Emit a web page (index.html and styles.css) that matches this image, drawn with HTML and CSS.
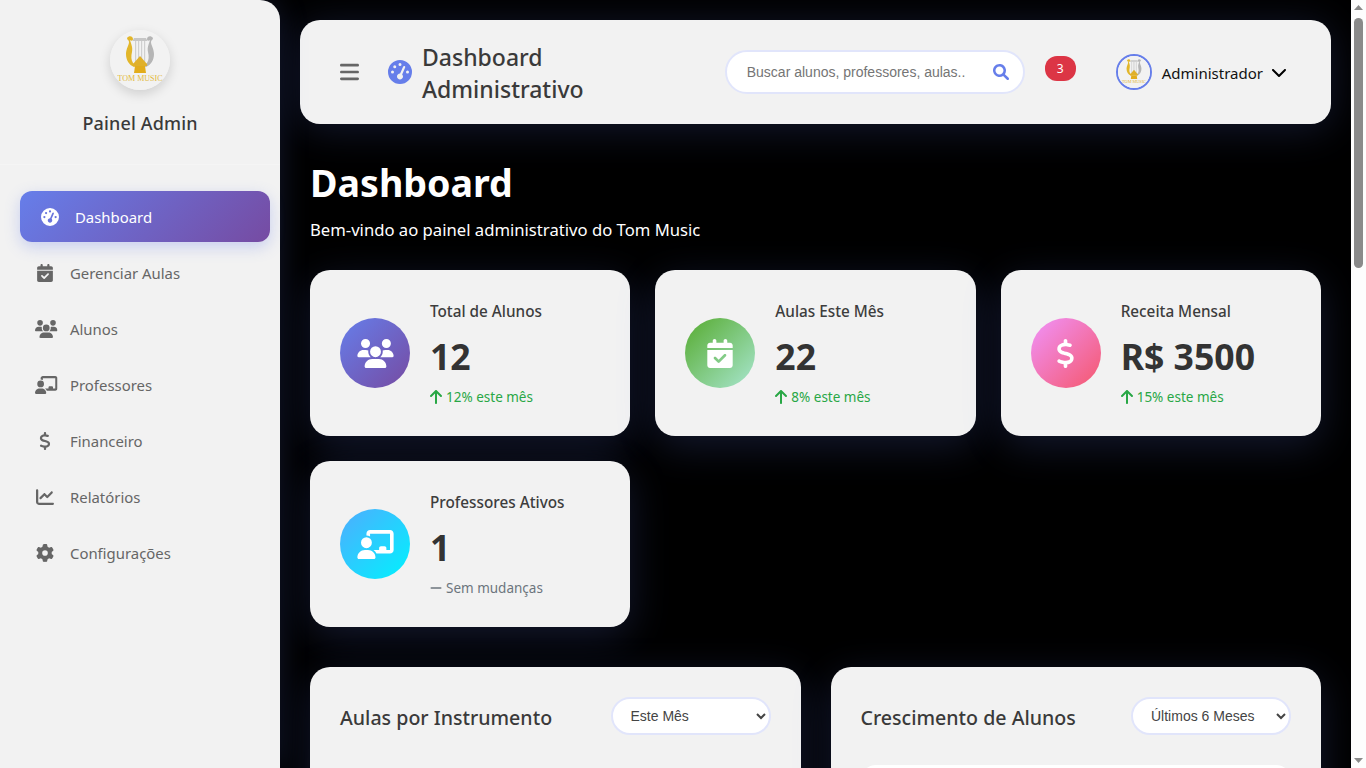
FILE: index.html
```html
<!DOCTYPE html>
<html lang="pt-BR">
<head>
    <meta charset="UTF-8">
    <meta name="viewport" content="width=device-width, initial-scale=1.0">
    <title>Dashboard Administrativo - Tom Music</title>
    <link rel="stylesheet" href="styles.css">
</head>
<body>
    <!-- Icon sprite -->
    <svg class="sprite" aria-hidden="true">
        <symbol id="i-gauge" viewBox="0 0 512 512"><path d="M0 256a256 256 0 1 1 512 0A256 256 0 1 1 0 256zM288 96a32 32 0 1 0 -64 0 32 32 0 1 0 64 0zM256 416c35.3 0 64-28.7 64-64c0-17.4-6.9-33.1-18.1-44.6L366 161.7c5.3-12.1-.2-26.3-12.3-31.6s-26.3 .2-31.6 12.3L257.9 288c-.6 0-1.3 0-1.9 0c-35.3 0-64 28.7-64 64s28.7 64 64 64zM176 144a32 32 0 1 0 -64 0 32 32 0 1 0 64 0zM96 288a32 32 0 1 0 0-64 32 32 0 1 0 0 64zm352-32a32 32 0 1 0 -64 0 32 32 0 1 0 64 0z"/></symbol>
        <symbol id="i-calendar" viewBox="0 0 448 512"><path d="M128 0c17.7 0 32 14.3 32 32V64H288V32c0-17.7 14.3-32 32-32s32 14.3 32 32V64h48c26.5 0 48 21.5 48 48v48H0V112C0 85.5 21.5 64 48 64H96V32c0-17.7 14.3-32 32-32zM0 192H448V464c0 26.5-21.5 48-48 48H48c-26.5 0-48-21.5-48-48V192zM329 305c9.4-9.4 9.4-24.6 0-33.9s-24.6-9.4-33.9 0l-95 95-47-47c-9.4-9.4-24.6-9.4-33.9 0s-9.4 24.6 0 33.9l64 64c9.4 9.4 24.6 9.4 33.9 0L329 305z"/></symbol>
        <symbol id="i-users" viewBox="0 0 640 512"><path d="M144 0a80 80 0 1 1 0 160A80 80 0 1 1 144 0zM512 0a80 80 0 1 1 0 160A80 80 0 1 1 512 0zM0 298.7C0 239.8 47.8 192 106.7 192h42.7c15.9 0 31 3.5 44.6 9.7c-1.3 7.2-1.9 14.7-1.9 22.3c0 38.2 16.8 72.5 43.3 96c-.2 0-.4 0-.7 0H21.3C9.6 320 0 310.4 0 298.7zM405.3 320c-.2 0-.4 0-.7 0c26.6-23.5 43.3-57.8 43.3-96c0-7.6-.7-15-1.9-22.3c13.6-6.3 28.7-9.7 44.6-9.7h42.7C592.2 192 640 239.8 640 298.7c0 11.8-9.6 21.3-21.3 21.3H405.3zM224 224a96 96 0 1 1 192 0 96 96 0 1 1 -192 0zM128 485.3C128 411.7 187.7 352 261.3 352H378.7C452.3 352 512 411.7 512 485.3c0 14.7-11.9 26.7-26.7 26.7H154.7c-14.7 0-26.7-11.9-26.7-26.7z"/></symbol>
        <symbol id="i-chalkboard" viewBox="0 0 640 512"><path d="M160 64c0-35.3 28.7-64 64-64H576c35.3 0 64 28.7 64 64V352c0 35.3-28.7 64-64 64H336.8c-11.8-25.5-29.9-47.5-52.4-64H384V320c0-17.7 14.3-32 32-32h64c17.7 0 32 14.3 32 32v32h64V64L224 64v49.1C205.2 102.2 183.3 96 160 96V64zm0 64a96 96 0 1 1 0 192 96 96 0 1 1 0-192zM133.3 352h53.3C260.3 352 320 411.7 320 485.3c0 14.7-11.9 26.7-26.7 26.7H26.7C11.9 512 0 500.1 0 485.3C0 411.7 59.7 352 133.3 352z"/></symbol>
        <symbol id="i-dollar" viewBox="0 0 320 512"><path d="M160 0c17.7 0 32 14.3 32 32V67.7c1.6 .2 3.1 .4 4.7 .7c.4 .1 .7 .1 1.1 .2l48 8.8c17.4 3.2 28.9 19.9 25.7 37.2s-19.9 28.9-37.2 25.7l-47.5-8.7c-31.3-4.6-58.9-1.5-78.3 6.2s-27.2 18.3-29 28.1c-2 10.7-.5 16.7 1.2 20.4c1.8 3.9 5.5 8.3 12.8 13.2c16.3 10.7 41.3 17.7 73.7 26.3l2.9 .8c28.6 7.6 63.6 16.8 89.6 33.8c14.2 9.3 27.6 21.9 35.9 39.5c8.5 17.9 10.3 37.9 6.4 59.2c-6.9 38-33.1 63.4-65.6 76.7c-13.7 5.6-28.6 9.2-44.4 11V480c0 17.7-14.3 32-32 32s-32-14.3-32-32V445.1c-.4-.1-.9-.1-1.3-.2l-.2 0 0 0c-24.4-3.8-64.5-14.3-91.5-26.3c-16.1-7.2-23.4-26.1-16.2-42.2s26.1-23.4 42.2-16.2c20.9 9.3 55.3 18.5 75.2 21.6c31.9 4.7 58.2 2 76-5.3c16.9-6.9 24.6-16.9 26.8-28.9c1.9-10.6 .4-16.7-1.3-20.4c-1.9-4-5.6-8.4-13-13.3c-16.4-10.7-41.5-17.7-74-26.3l-2.8-.7 0 0C119.4 279.3 84.4 270 58.4 253c-14.2-9.3-27.5-22-35.8-39.6c-8.4-17.9-10.1-37.9-6.1-59.2C23.7 116 52.3 91.2 84.8 78.3c13.3-5.3 27.9-8.9 43.2-11V32c0-17.7 14.3-32 32-32z"/></symbol>
        <symbol id="i-chart" viewBox="0 0 512 512"><path d="M64 64c0-17.7-14.3-32-32-32S0 46.3 0 64V400c0 44.2 35.8 80 80 80H480c17.7 0 32-14.3 32-32s-14.3-32-32-32H80c-8.8 0-16-7.2-16-16V64zm406.6 86.6c12.5-12.5 12.5-32.8 0-45.3s-32.8-12.5-45.3 0L320 210.7l-57.4-57.4c-12.5-12.5-32.8-12.5-45.3 0l-112 112c-12.5 12.5-12.5 32.8 0 45.3s32.8 12.5 45.3 0L240 221.3l57.4 57.4c12.5 12.5 32.8 12.5 45.3 0l128-128z"/></symbol>
        <symbol id="i-gear" viewBox="0 0 512 512"><path d="M495.9 166.6c3.2 8.7 .5 18.4-6.4 24.6l-43.3 39.4c1.1 8.3 1.7 16.8 1.7 25.4s-.6 17.1-1.7 25.4l43.3 39.4c6.9 6.2 9.6 15.9 6.4 24.6c-4.4 11.9-9.7 23.3-15.8 34.3l-4.7 8.1c-6.6 11-14 21.4-22.1 31.2c-5.9 7.2-15.7 9.6-24.5 6.8l-55.7-17.7c-13.4 10.3-28.2 18.9-44 25.4l-12.5 57.1c-2 9.1-9 16.3-18.2 17.8c-13.8 2.3-28 3.5-42.5 3.5s-28.7-1.2-42.5-3.5c-9.2-1.5-16.2-8.7-18.2-17.8l-12.5-57.1c-15.8-6.5-30.6-15.1-44-25.4L83.1 425.9c-8.8 2.8-18.6 .3-24.5-6.8c-8.1-9.8-15.5-20.2-22.1-31.2l-4.7-8.1c-6.1-11-11.4-22.4-15.8-34.3c-3.2-8.7-.5-18.4 6.4-24.6l43.3-39.4C64.6 273.1 64 264.6 64 256s.6-17.1 1.7-25.4L22.4 191.2c-6.9-6.2-9.6-15.9-6.4-24.6c4.4-11.9 9.7-23.3 15.8-34.3l4.7-8.1c6.6-11 14-21.4 22.1-31.2c5.9-7.2 15.7-9.6 24.5-6.8l55.7 17.7c13.4-10.3 28.2-18.9 44-25.4l12.5-57.1c2-9.1 9-16.3 18.2-17.8C227.3 1.2 241.5 0 256 0s28.7 1.2 42.5 3.5c9.2 1.5 16.2 8.7 18.2 17.8l12.5 57.1c15.8 6.5 30.6 15.1 44 25.4l55.7-17.7c8.8-2.8 18.6-.3 24.5 6.8c8.1 9.8 15.5 20.2 22.1 31.2l4.7 8.1c6.1 11 11.4 22.4 15.8 34.3zM256 336a80 80 0 1 0 0-160 80 80 0 1 0 0 160z"/></symbol>
        <symbol id="i-bars" viewBox="0 0 448 512"><path d="M0 96C0 78.3 14.3 64 32 64H416c17.7 0 32 14.3 32 32s-14.3 32-32 32H32C14.3 128 0 113.7 0 96zM0 256c0-17.7 14.3-32 32-32H416c17.7 0 32 14.3 32 32s-14.3 32-32 32H32c-17.7 0-32-14.3-32-32zM448 416c0 17.7-14.3 32-32 32H32c-17.7 0-32-14.3-32-32s14.3-32 32-32H416c17.7 0 32 14.3 32 32z"/></symbol>
        <symbol id="i-search" viewBox="0 0 512 512"><path d="M500.3 443.7l-119.7-119.7c27.22-40.41 40.65-90.9 33.46-144.7C401.8 87.79 326.8 13.32 235.2 1.723C99.01-15.51-15.51 99.01 1.724 235.2c11.6 91.64 86.08 166.7 177.6 178.9c53.8 7.189 104.3-6.236 144.7-33.46l119.7 119.7c15.62 15.62 40.95 15.62 56.57 0C515.9 484.7 515.9 459.3 500.3 443.7zM79.1 208c0-70.58 57.42-128 128-128s128 57.42 128 128c0 70.58-57.42 128-128 128S79.1 278.6 79.1 208z"/></symbol>
        <symbol id="i-chevron" viewBox="0 0 448 512"><path d="M224 416c-8.188 0-16.38-3.125-22.62-9.375l-192-192c-12.5-12.5-12.5-32.75 0-45.25s32.75-12.5 45.25 0L224 338.8l169.4-169.4c12.5-12.5 32.75-12.5 45.25 0s12.5 32.75 0 45.25l-192 192C240.4 412.9 232.2 416 224 416z"/></symbol>
        <symbol id="i-up" viewBox="0 0 384 512"><path d="M214.6 41.4c-12.5-12.5-32.8-12.5-45.3 0l-160 160c-12.5 12.5-12.5 32.8 0 45.3s32.8 12.5 45.3 0L160 141.2V448c0 17.7 14.3 32 32 32s32-14.3 32-32V141.2L329.4 246.6c12.5 12.5 32.8 12.5 45.3 0s12.5-32.8 0-45.3l-160-160z"/></symbol>
        <symbol id="i-minus" viewBox="0 0 448 512"><path d="M432 256c0 17.7-14.3 32-32 32L48 288c-17.7 0-32-14.3-32-32s14.3-32 32-32l352 0c17.7 0 32 14.3 32 32z"/></symbol>
        <symbol id="i-logo" viewBox="0 0 60 60">
            <rect width="60" height="60" fill="#f2f2f2"/>
            <path d="M24 8h12l1.500 3h-15z" fill="#c6c6c6"/>
            <path d="M25 11h1.200v21H25zM28 11h1.200v18H28zM31 11h1.200v18H31zM34 11h1.200v21H34z" fill="#cfcfcf"/>
            <path d="M17 8c2-3 6-2 6 1 0 2-2 2-3 1 1 4 3 7 2 12-1 4-1 8 1 11 1 1 3 2 4 3l-3 1c-5-2-8-7-8-13 0-5 3-9 3-12 0-2-2-2-2-4z" fill="#e2b62a"/>
            <path d="M43 8c-2-3-6-2-6 1 0 2 2 2 3 1-1 4-3 7-2 12 1 4 1 8-1 11-1 1-3 2-4 3l3 1c5-2 8-7 8-13 0-5-3-9-3-12 0-2 2-2 2-4z" fill="#b5b5b5"/>
            <path d="M30 26l7 8v2H23v-2z" fill="#e0b02a"/>
            <path d="M25 36h10l1 7H24z" fill="#e2ac1c"/>
            <text x="30" y="50.500" class="logo-text">TOM MUSIC</text>
        </symbol>
    </svg>

    <!-- Sidebar -->
    <aside class="sidebar">
        <div class="sidebar-header">
            <div class="sidebar-logo"><svg><use href="#i-logo"/></svg></div>
            <h3>Painel Admin</h3>
        </div>
        <nav class="sidebar-nav">
            <a class="nav-item active" href="#"><svg class="nav-icon"><use href="#i-gauge"/></svg>Dashboard</a>
            <a class="nav-item" href="#"><svg class="nav-icon"><use href="#i-calendar"/></svg>Gerenciar Aulas</a>
            <a class="nav-item" href="#"><svg class="nav-icon wide"><use href="#i-users"/></svg>Alunos</a>
            <a class="nav-item" href="#"><svg class="nav-icon wide"><use href="#i-chalkboard"/></svg>Professores</a>
            <a class="nav-item" href="#"><svg class="nav-icon"><use href="#i-dollar"/></svg>Financeiro</a>
            <a class="nav-item" href="#"><svg class="nav-icon"><use href="#i-chart"/></svg>Relatórios</a>
            <a class="nav-item" href="#"><svg class="nav-icon"><use href="#i-gear"/></svg>Configurações</a>
        </nav>
    </aside>

    <main class="main">
        <!-- Top bar -->
        <header class="topbar">
            <svg class="menu-icon"><use href="#i-bars"/></svg>
            <svg class="title-icon"><use href="#i-gauge"/></svg>
            <h1 class="topbar-title">Dashboard Administrativo</h1>
            <div class="search">
                <input class="search-input" type="text" placeholder="Buscar alunos, professores, aulas...">
                <svg class="search-icon"><use href="#i-search"/></svg>
            </div>
            <span class="badge">3</span>
            <div class="user">
                <span class="user-avatar"><svg><use href="#i-logo"/></svg></span>
                <span class="user-name">Administrador</span>
                <svg class="user-chevron"><use href="#i-chevron"/></svg>
            </div>
        </header>

        <section class="content">
            <h1 class="page-title">Dashboard</h1>
            <p class="page-sub">Bem-vindo ao painel administrativo do Tom Music</p>

            <!-- Stats -->
            <div class="stats">
                <div class="stat-card">
                    <div class="stat-icon purple"><svg class="icon-users"><use href="#i-users"/></svg></div>
                    <div class="stat-info">
                        <h3>Total de Alunos</h3>
                        <div class="stat-value">12</div>
                        <div class="stat-change up"><svg><use href="#i-up"/></svg>12% este mês</div>
                    </div>
                </div>
                <div class="stat-card">
                    <div class="stat-icon green"><svg class="icon-calendar"><use href="#i-calendar"/></svg></div>
                    <div class="stat-info">
                        <h3>Aulas Este Mês</h3>
                        <div class="stat-value">22</div>
                        <div class="stat-change up"><svg><use href="#i-up"/></svg>8% este mês</div>
                    </div>
                </div>
                <div class="stat-card">
                    <div class="stat-icon pink"><svg class="icon-dollar"><use href="#i-dollar"/></svg></div>
                    <div class="stat-info">
                        <h3>Receita Mensal</h3>
                        <div class="stat-value">R$ 3500</div>
                        <div class="stat-change up"><svg><use href="#i-up"/></svg>15% este mês</div>
                    </div>
                </div>
                <div class="stat-card">
                    <div class="stat-icon blue"><svg class="icon-users"><use href="#i-chalkboard"/></svg></div>
                    <div class="stat-info">
                        <h3>Professores Ativos</h3>
                        <div class="stat-value">1</div>
                        <div class="stat-change same"><svg><use href="#i-minus"/></svg>Sem mudanças</div>
                    </div>
                </div>
            </div>

            <!-- Charts -->
            <div class="charts">
                <div class="chart-card">
                    <div class="chart-head">
                        <h3>Aulas por Instrumento</h3>
                        <select class="chart-select">
                            <option>Este Mês</option>
                            <option>Último Trimestre</option>
                        </select>
                    </div>
                    <div class="chart-body"></div>
                </div>
                <div class="chart-card">
                    <div class="chart-head">
                        <h3>Crescimento de Alunos</h3>
                        <select class="chart-select">
                            <option>Últimos 6 Meses</option>
                            <option>Último Ano</option>
                        </select>
                    </div>
                    <div class="chart-body canvas"></div>
                </div>
            </div>
        </section>
    </main>

    <!-- Window scrollbar as it shows in the screenshot -->
    <div class="scrollbar" aria-hidden="true">
        <svg class="scroll-arrow" viewBox="0 0 15 17"><path d="M3 10l4.500-5 4.500 5z"/></svg>
        <div class="scroll-track"><div class="scroll-thumb"></div></div>
        <svg class="scroll-arrow" viewBox="0 0 15 17"><path d="M3 7l4.500 5 4.500-5z"/></svg>
    </div>
</body>
</html>
```

FILE: styles.css
```css
/* Basic Styling */
* {
    box-sizing: border-box;
    margin: 0;
    padding: 0;
}

body {
    font-family: "Noto Sans", "Open Sans", sans-serif;
    background-color: #000;
    display: flex;
    align-items: flex-start;
    color: #333;
}

.sprite {
    width: 0;
    height: 0;
    position: absolute;
}

svg {
    fill: currentColor;
    display: block;
}

/* Scrollbar */
.scrollbar {
    flex: 0 0 15px;
    height: 100vh;
    position: sticky;
    top: 0;
    display: flex;
    flex-direction: column;
    background: #fdfdfd;
    color: #8a8a8a;
}

.scroll-arrow {
    width: 15px;
    height: 17px;
    flex: none;
}

.scroll-track {
    flex: 1;
}

.scroll-thumb {
    width: 9px;
    height: 250px;
    margin: 1px 0 0 3px;
    border-radius: 5px;
    background: #8a8a8a;
}

/* Sidebar */
.sidebar {
    flex: 0 0 280px;
    height: 100vh;
    position: sticky;
    top: 0;
    background: #f2f2f2;
    border-radius: 0 20px 0 0;
    box-shadow: 0 0 30px rgba(102, 126, 234, 0.2);
}

.sidebar-header {
    height: 165px;
    padding-top: 30px;
    text-align: center;
    border-bottom: 1px solid #f5f5f5;
}

.sidebar-logo {
    width: 60px;
    height: 60px;
    margin: 0 auto 19px;
    border-radius: 50%;
    overflow: hidden;
    box-shadow: 0 4px 12px rgba(0, 0, 0, 0.15);
}

.sidebar-logo svg {
    width: 60px;
    height: 60px;
}

.logo-text {
    font-family: "Liberation Serif", serif;
    font-size: 8px;
    text-anchor: middle;
    fill: #e2b93b;
}

.sidebar-header h3 {
    font-size: 18px;
    font-weight: 500;
    letter-spacing: 0.15px;
    line-height: 28px;
    color: #3a3a3a;
}

.sidebar-nav {
    padding: 26px 15px 0;
}

.nav-item {
    display: flex;
    align-items: center;
    height: 51px;
    padding: 0 20px;
    margin-bottom: 5px;
    border-radius: 12px;
    font-size: 14.9px;
    color: #666;
    text-decoration: none;
}

.nav-icon {
    width: 20px;
    height: 18px;
    margin-right: 15px;
    flex: none;
}

.nav-icon.wide {
    width: 22.5px;
    margin-right: 12.5px;
}

.nav-item.active {
    color: #fff;
    background: linear-gradient(135deg, #667eea, #764ba2);
    transform: translateX(5px);
    box-shadow: 0 5px 15px rgba(102, 126, 234, 0.3);
}

/* Main */
.main {
    flex: 1;
    min-width: 0;
    padding: 20px;
}

.topbar {
    display: flex;
    align-items: center;
    height: 104px;
    padding: 0 45px 0 40px;
    background: #f2f2f2;
    border-radius: 20px;
    box-shadow: 0 5px 40px rgba(102, 126, 234, 0.2);
}

.menu-icon {
    width: 19px;
    height: 22px;
    color: #666;
    margin-right: 29px;
    flex: none;
}

.title-icon {
    width: 24px;
    height: 24px;
    color: #667eea;
    margin-right: 10px;
    flex: none;
}

.topbar-title {
    width: 180px;
    margin-top: 2px;
    font-size: 23px;
    font-weight: 500;
    line-height: 32px;
    color: #3a3a3a;
}

.search {
    width: 300px;
    height: 44px;
    margin-left: auto;
    position: relative;
}

.search-input {
    width: 100%;
    height: 100%;
    padding: 0 57px 0 20px;
    border: 2px solid #e1e5fb;
    border-radius: 25px;
    background: #fff;
    font-family: "Liberation Sans", Arial, sans-serif;
    font-size: 14px;
    outline: none;
}

.search-icon {
    position: absolute;
    right: 16px;
    top: 14px;
    width: 16px;
    height: 16px;
    color: #667eea;
}

.badge {
    width: 31px;
    height: 25px;
    margin: 0 40px 7px 20px;
    border-radius: 12px;
    background: #dc3545;
    color: #fff;
    font-size: 12px;
    line-height: 25px;
    text-align: center;
}

.user {
    display: flex;
    align-items: center;
}

.user-avatar {
    width: 36px;
    height: 36px;
    border: 2px solid #667eea;
    border-radius: 50%;
    overflow: hidden;
    margin-right: 10px;
}

.user-avatar svg {
    width: 32px;
    height: 32px;
}

.user-name {
    margin-top: 2px;
    margin-right: 9px;
    font-size: 15px;
    color: #111;
}

.user-chevron {
    width: 14px;
    height: 16px;
    color: #000;
}

/* Content */
.content {
    padding: 39px 10px 0;
}

.page-title {
    font-size: 37.6px;
    font-weight: 700;
    line-height: 40px;
    color: #fff;
}

.page-sub {
    margin: 15px 0 29px;
    font-size: 16.66px;
    line-height: 23px;
    color: #fff;
}

/* Stat cards */
.stats {
    display: grid;
    grid-template-columns: repeat(3, 1fr);
    gap: 25px;
}

.stat-card {
    display: flex;
    align-items: center;
    height: 166px;
    padding: 0 30px;
    gap: 20px;
    background: #f2f2f2;
    border-radius: 20px;
    box-shadow: 0 10px 40px rgba(102, 126, 234, 0.2);
}

.stat-icon {
    width: 70px;
    height: 70px;
    flex: none;
    border-radius: 50%;
    display: flex;
    align-items: center;
    justify-content: center;
    color: #fff;
}

.stat-icon.purple { background: linear-gradient(135deg, #667eea, #764ba2); }
.stat-icon.green { background: linear-gradient(135deg, #56ab2f, #a8e6cf); }
.stat-icon.pink { background: linear-gradient(135deg, #f093fb, #f5576c); }
.stat-icon.blue { background: linear-gradient(135deg, #4facfe, #00f2fe); }

.icon-users { width: 37px; height: 29px; }
.icon-calendar { width: 26px; height: 29px; }
.icon-dollar { width: 19px; height: 29px; }

.stat-info h3 {
    font-size: 15.3px;
    font-weight: 500;
    line-height: 20px;
    color: #3d3d3d;
}

.stat-value {
    margin: 13px 0 10px;
    font-size: 35.6px;
    font-weight: 700;
    line-height: 44px;
    color: #333;
}

.stat-change {
    display: flex;
    align-items: center;
    gap: 4px;
    font-size: 13.5px;
    line-height: 18px;
}

.stat-change svg {
    width: 12px;
    height: 16px;
}

.stat-change.up { color: #28a745; }
.stat-change.same { color: #6c757d; }

/* Charts */
.charts {
    display: grid;
    grid-template-columns: 1fr 1fr;
    gap: 30px;
    margin-top: 40px;
}

.chart-card {
    padding: 30px;
    background: #f2f2f2;
    border-radius: 20px;
    box-shadow: 0 10px 40px rgba(102, 126, 234, 0.2);
}

.chart-head {
    display: flex;
    align-items: center;
    justify-content: space-between;
    margin-bottom: 30px;
}

.chart-head h3 {
    margin-top: 2px;
    font-size: 19.6px;
    font-weight: 500;
    color: #3a3a3a;
}

.chart-select {
    width: 160px;
    height: 38px;
    padding: 0 14px;
    border: 2px solid #e1e5fb;
    border-radius: 20px;
    background: #fff;
    font-family: "Liberation Sans", Arial, sans-serif;
    font-size: 14px;
    color: #444;
    outline: none;
}

.chart-body {
    height: 400px;
}

.chart-body.canvas {
    background: #fff;
    border-radius: 15px;
}
```
